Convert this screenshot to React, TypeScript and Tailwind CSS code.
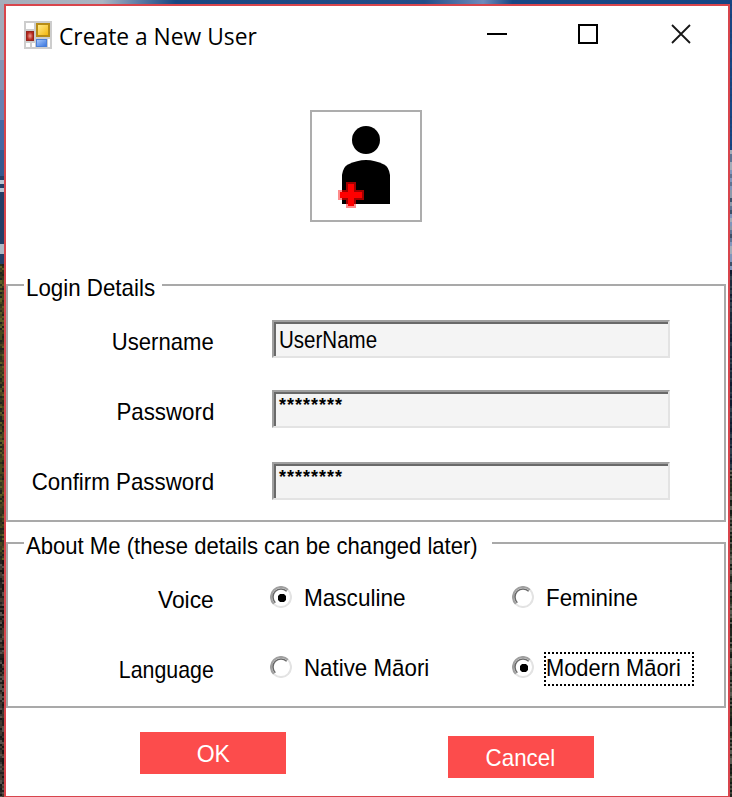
import React from "react";

const UI = "font-['Liberation_Sans',Arial,sans-serif] text-[24px] leading-[28px] whitespace-nowrap inline-block";

function noise(i: number) {
  const v = Math.sin(i * 127.1 + 11.7) * 43758.5453;
  return v - Math.floor(v);
}

const leftSky = ["#a3abba", "#9aa5ba", "#8494b5", "#6680b2", "#4568a3", "#35598f"];
const leftLand = ["#2c3019", "#454a1d", "#5b5d25", "#20231c", "#38381f", "#4b4320"];
const rock = ["#24211e", "#3a3632", "#57504a", "#171614", "#463a2e"];
const rightTop = ["#164684", "#17427c", "#1a4583"];
const rightMid = ["#8195bb", "#5f7393", "#a4adb9", "#3c5069", "#8c99aa"];
const rightLow = ["#0f1b30", "#1d2b3d", "#182838", "#2f3e4c"];
const rightEnd = ["#141d16", "#2d3423", "#41453a", "#5b5b52", "#22261e"];

function leftColour(y: number, i: number) {
  if (y < 176) return leftSky[Math.min(5, Math.floor(y / 30))];
  if ((y >= 180 && y < 184) || (y >= 188 && y < 192)) return "#b9c5d2";
  if (y >= 243 && y < 254) return "#aeb9c5";
  if (y < 264) return "#243f67";
  if (y < 560) return leftLand[Math.floor(noise(i) * 6)];
  return rock[Math.floor(noise(i) * 5)];
}

function rightColour(y: number, i: number) {
  if (y < 150) return rightTop[Math.floor(noise(i) * 3)];
  if (y < 270) return rightMid[Math.floor(noise(Math.floor(i / 4)) * 5)];
  if (y < 470) return rightLow[Math.floor(noise(i) * 4)];
  return rightEnd[Math.floor(noise(i) * 5)];
}

function Landscape() {
  const cells: React.ReactElement[] = [];
  let i = 0;
  for (let y = 0; y < 797; y += 2) {
    for (let x = 0; x < 4; x += 2) {
      i++;
      cells.push(<rect key={"l" + i} x={x} y={y} width={2} height={2} fill={leftColour(y, i)} />);
    }
    cells.push(<rect key={"r" + i} x={730} y={y} width={2} height={2} fill={rightColour(y, i)} />);
  }
  return (
    <svg className="absolute inset-0" width="732" height="797" shapeRendering="crispEdges">
      <defs>
        <linearGradient id="sky">
          <stop offset="0" stopColor="#a5adba" />
          <stop offset=".14" stopColor="#aab5c2" />
          <stop offset=".19" stopColor="#5d7ba5" />
          <stop offset=".24" stopColor="#194781" />
          <stop offset=".58" stopColor="#234d88" />
          <stop offset=".66" stopColor="#6f8abb" />
          <stop offset=".7" stopColor="#194784" />
          <stop offset="1" stopColor="#164684" />
        </linearGradient>
      </defs>
      {cells}
      <rect width="732" height="4" fill="url(#sky)" />
    </svg>
  );
}

function AppIcon() {
  return (
    <svg width="28" height="28" viewBox="0 0 28 28">
      <defs>
        <linearGradient id="gold" x1="0" y1="0" x2="1" y2="1">
          <stop offset="0" stopColor="#ffe98a" />
          <stop offset="1" stopColor="#f3b70e" />
        </linearGradient>
        <radialGradient id="ruby">
          <stop offset="0" stopColor="#f0a095" />
          <stop offset="1" stopColor="#b3271c" />
        </radialGradient>
        <linearGradient id="azure" x1="0" y1="0" x2="1" y2="1">
          <stop offset="0" stopColor="#a3c6fb" />
          <stop offset="1" stopColor="#3d78df" />
        </linearGradient>
      </defs>
      <rect width="28" height="28" fill="#cdcdcd" />
      <rect x="2" y="2" width="8" height="6" fill="#fff" />
      <rect x="2" y="22" width="4" height="4" fill="#fff" />
      <rect x="8" y="22" width="3" height="4" fill="#fff" />
      <rect x="24" y="18" width="2" height="8" fill="#fff" />
      <rect x="12" y="2" width="14" height="14" fill="#b78c16" />
      <rect x="14" y="4" width="10" height="10" fill="url(#gold)" />
      <rect x="2" y="10" width="8" height="10" fill="#96251c" />
      <rect x="3" y="11" width="6" height="8" fill="url(#ruby)" />
      <rect x="12" y="18" width="11" height="8" fill="#4a7fd8" />
      <rect x="13" y="19" width="9" height="6" fill="url(#azure)" />
    </svg>
  );
}

function UserPlus() {
  return (
    <svg width="108" height="108" viewBox="312 112 108 108">
      <circle cx="366" cy="140" r="14" fill="#000" />
      <path d="M342 204V175Q343 167 348 164.500Q357 160 366 160Q375 160 384 164.500Q389 167 390 175V204Z" fill="#000" />
      <path d="M346 182h10v8h8v10h-8v8h-10v-8h-8v-10h8Z" fill="#a00000" />
      <path d="M338 190h4v10h-4ZM346 204h10v4h-10Z" fill="#ff8b8b" />
      <path d="M348 184h6v8h8v6h-8v8h-6v-8h-8v-6h8Z" fill="#ff0000" />
    </svg>
  );
}

function Field({ children }: { children: React.ReactNode }) {
  return (
    <div className="h-[38px] w-[398px] border-2 border-t-[#a0a0a0] border-l-[#a0a0a0] border-r-[#e3e3e3] border-b-[#e3e3e3]">
      <div className="flex h-[34px] items-start border-t-2 border-l-2 border-[#696969] bg-[#f4f4f4] pl-[3px]">{children}</div>
    </div>
  );
}

function Stars() {
  return <span className="inline-block font-['Liberation_Sans',Arial,sans-serif] text-[18px] leading-[22px] font-bold tracking-[1px]">********</span>;
}

function Radio({ on }: { on?: boolean }) {
  return (
    <svg width="22" height="22" viewBox="0 0 22 22" fill="none" strokeWidth="2" className="shrink-0">
      <path d="M3.900 18.100A10 10 0 0 1 18.100 3.900" stroke="#a0a0a0" />
      <path d="M18.100 3.900A10 10 0 0 1 3.900 18.100" stroke="#e3e3e3" />
      <path d="M5.300 16.700A8 8 0 0 1 16.700 5.300" stroke="#696969" strokeWidth="1.600" />
      {on && <path d="M10 8h4l2 2v4l-2 2h-4l-2-2v-4Z" fill="#000" />}
    </svg>
  );
}

export default function App() {
  return (
    <div className="relative h-[797px] w-[732px] overflow-hidden bg-[#1c2b3b] pt-1 pl-1">
      <Landscape />
      <div className="relative flex h-[793px] w-[726px] flex-col border-2 border-b border-[#d8454c] bg-white text-black">
        <header className="flex h-[60px] items-start pl-[18px]">
          <div className="pt-[15px]"><AppIcon /></div>
          <h1 className="mt-[13px] ml-[7px] w-[427px] origin-left scale-x-[0.95] font-['Open_Sans','Noto_Sans',sans-serif] text-[24px] leading-[34px] whitespace-nowrap">Create a New User</h1>
          <svg width="206" height="24" viewBox="486 22 206 24" className="mt-4" fill="none" stroke="#000" strokeWidth="2">
            <path d="M487 34H507" />
            <rect x="579" y="25" width="18" height="18" />
            <path d="M672 25L690 43M690 25L672 43" stroke="#161616" strokeWidth="1.800" />
          </svg>
        </header>
        <button className="mt-[44px] ml-[304px] h-[112px] w-[112px] border-2 border-[#adadad]"><UserPlus /></button>

        <fieldset className="mt-[51px] h-[249px] w-[720px] border-2 border-[#a9a9a9]">
          <legend className="ml-4 h-6 w-[138px] pt-px pl-[2px]"><span className={`${UI} origin-left scale-x-[0.93]`}>Login Details</span></legend>
          <div className="flex pt-[23px]">
            <div className="mr-[58px] flex w-[206px] flex-col items-end gap-[42px] pt-2">
              <label className={`${UI} origin-right scale-x-[0.92]`}>Username</label>
              <label className={`${UI} origin-right scale-x-[0.93]`}>Password</label>
              <label className={`${UI} origin-right scale-x-[0.93]`}>Confirm Password</label>
            </div>
            <div>
              <Field><span className={`${UI} mt-[2px] origin-left scale-x-[0.855]`}>UserName</span></Field>
              <div className="mt-8"><Field><Stars /></Field></div>
              <div className="mt-[34px]"><Field><Stars /></Field></div>
            </div>
          </div>
        </fieldset>

        <fieldset className="mt-[9px] h-[177px] w-[720px] border-2 border-[#a9a9a9]">
          <legend className="ml-4 h-6 w-[468px] pt-px pl-[2px]"><span className={`${UI} origin-left scale-x-[0.92]`}>About Me (these details can be changed later)</span></legend>
          <div className="flex pt-[25px]">
            <div className="mr-[56px] flex w-[206px] flex-col items-end gap-[42px] pt-[6px]">
              <span className={`${UI} origin-right scale-x-[0.95]`}>Voice</span>
              <span className={`${UI} origin-right scale-x-[0.89]`}>Language</span>
            </div>
            <div className="flex w-[242px] flex-col gap-9">
              <label className="flex h-[34px] items-center"><Radio on /><span className={`${UI} mt-[2px] ml-3 origin-left scale-x-[0.94]`}>Masculine</span></label>
              <label className="flex h-[34px] items-center"><Radio /><span className={`${UI} mt-[2px] ml-3 origin-left scale-x-[0.93]`}>Native Māori</span></label>
            </div>
            <div className="flex flex-col gap-9">
              <label className="flex h-[34px] items-center"><Radio /><span className={`${UI} mt-[2px] ml-3 origin-left scale-x-[0.93]`}>Feminine</span></label>
              <label className="flex h-[34px] items-center"><Radio on /><span className="mt-[4px] ml-[10px] flex h-[34px] w-[150px] shrink-0 items-start border-2 border-dotted border-black"><span className={`${UI} origin-left scale-x-[0.91]`}>Modern Māori</span></span></label>
            </div>
          </div>
        </fieldset>

        <footer className="mt-6 flex items-start pl-[134px] text-white">
          <button className="h-[42px] w-[146px] bg-[#fc4c4c]"><span className={`${UI} mt-px scale-x-[0.96]`}>OK</span></button>
          <button className="mt-1 ml-[162px] h-[42px] w-[146px] bg-[#fc4c4c]"><span className={`${UI} mt-px mr-[2px] scale-x-[0.93]`}>Cancel</span></button>
        </footer>
      </div>
    </div>
  );
}
